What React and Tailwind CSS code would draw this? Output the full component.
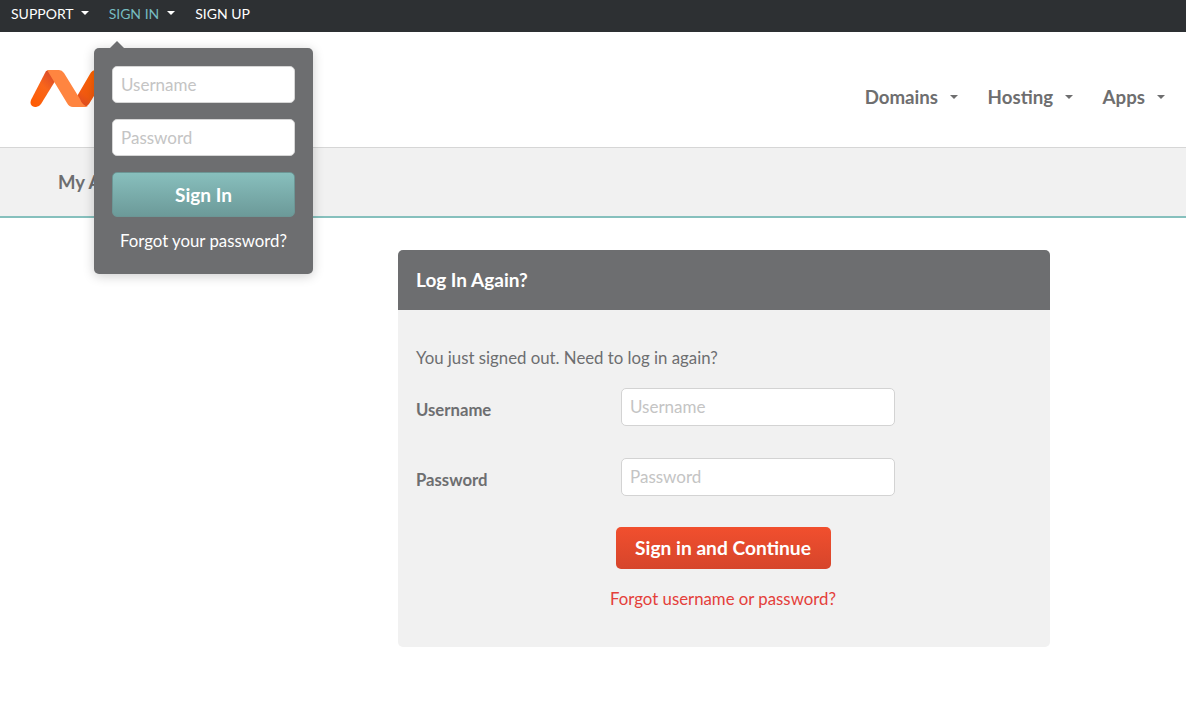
import { useState } from 'react';

const font = "font-['Lato','Noto_Sans',sans-serif]";

function Caret({ className }) {
  return <span className={`inline-block w-0 h-0 border-x-[4px] border-x-transparent border-t-[4px] ${className}`} />;
}

function Logo() {
  return (
    <svg width="90" height="40" viewBox="0 0 90 40" className="block">
      <defs>
        <linearGradient id="leg" x1="0" y1="1" x2="0.7" y2="0">
          <stop offset="0" stopColor="#ff5a00" />
          <stop offset="0.6" stopColor="#f9661a" />
          <stop offset="1" stopColor="#d94a2a" />
        </linearGradient>
        <linearGradient id="rise" x1="0" y1="1" x2="0.6" y2="0">
          <stop offset="0" stopColor="#d2432c" />
          <stop offset="0.4" stopColor="#f25a10" />
          <stop offset="1" stopColor="#ff6400" />
        </linearGradient>
      </defs>
      <path d="M16 2 Q18 1 22 1 L27 9 L11 35 Q9 38 6 38 H5 Q-1 37 1 31 Z" fill="url(#leg)" />
      <path d="M46 29 L60 5 Q62 1 66 1 H72 V14 L59 35 Q57 38 54 38 Z" fill="url(#rise)" />
      <path d="M17 1 H29 Q32 1 34 4 L50 30 Q52 36 58 38 H43 Q39 38 37 34 Z" fill="#ff8540" />
    </svg>
  );
}

function TopBar() {
  return (
    <div className="h-8 bg-[#2d3033] flex items-center pl-[11px] pb-[6px] text-[14px] text-white">
      <span>SUPPORT</span>
      <Caret className="ml-[7px] border-t-white" />
      <span className="ml-[20px] text-[#76bcc0]">SIGN IN</span>
      <Caret className="ml-[8px] border-t-white" />
      <span className="ml-[20px]">SIGN UP</span>
    </div>
  );
}

function MainNav() {
  const items = ['Domains', 'Hosting', 'Apps'];
  return (
    <header className="h-[116px] bg-white border-b border-[#d6d6d6] flex items-center justify-between pl-[30px] pr-[21px]">
      <div className="mt-[-2px]"><Logo /></div>
      <nav className="flex items-center gap-[29.5px] mt-[15px] text-[18.7px] font-bold text-[#6e6e6f]">
        {items.map((item) => (
          <span key={item} className="flex items-center">
            {item}
            <Caret className="ml-[12px] border-t-[#6e6e6f]" />
          </span>
        ))}
      </nav>
    </header>
  );
}

function SignInPopover() {
  return (
    <div className="absolute left-[94px] top-[48px] w-[219px] h-[226px] bg-[#6d6e70] rounded-[5px] shadow-[0_2px_12px_rgba(0,0,0,0.2)] px-[18px] pt-[18px]">
      <span className="absolute left-[16px] -top-[7px] w-0 h-0 border-x-[7px] border-x-transparent border-b-[7px] border-b-[#6d6e70]" />
      <input placeholder="Username" className="block w-full h-[37px] bg-white border border-[#d6d6d6] rounded-[5px] px-[8px] text-[17px] outline-none placeholder:text-[#c4c4c4]" />
      <input placeholder="Password" className="block w-full h-[37px] mt-[16px] bg-white border border-[#d6d6d6] rounded-[5px] px-[8px] text-[17px] outline-none placeholder:text-[#c4c4c4]" />
      <button className="block w-full h-[45px] mt-[16px] pt-[1px] rounded-[5px] border border-[#6c9695] bg-gradient-to-b from-[#88bfbd] to-[#6c9a99] text-white text-[19px] font-bold">Sign In</button>
      <p className="mt-[14px] text-center text-[16.8px] leading-[20px] text-white whitespace-nowrap">Forgot your password?</p>
    </div>
  );
}

function Field({ label, top }) {
  return (
    <div className={`flex items-center ${top}`}>
      <label className="w-[205px] pt-[7px] text-[16.7px] font-bold text-[#6d6e70]">{label}</label>
      <input placeholder={label} className="w-[274px] h-[38px] bg-white border border-[#d3d3d3] rounded-[5px] px-[8px] pb-[2px] text-[17px] outline-none placeholder:text-[#c4c4c4]" />
    </div>
  );
}

function LoginCard() {
  return (
    <section className="ml-[398px] mt-[32px] w-[652px] h-[397px] rounded-[5px] overflow-hidden bg-[#f1f1f1]">
      <h2 className="h-[60px] bg-[#6d6e70] pl-[18px] flex items-center text-[19px] font-bold text-white">Log In Again?</h2>
      <div className="px-[18px]">
        <p className="mt-[37px] text-[16.8px] leading-[22px] text-[#6d6e70]">You just signed out. Need to log in again?</p>
        <Field label="Username" top="mt-[19px]" />
        <Field label="Password" top="mt-[32px]" />
        <div className="flex flex-col items-center w-[614px]">
          <button className="mt-[31px] w-[215px] h-[42px] rounded-[5px] bg-gradient-to-b from-[#f14f2e] to-[#d6452b] text-white text-[19.2px] font-bold">Sign in and Continue</button>
          <a className="mt-[19px] text-[16.8px] leading-[22px] text-[#e4403a]">Forgot username or password?</a>
        </div>
      </div>
    </section>
  );
}

export default function App() {
  const [open] = useState(true);
  return (
    <div className={`relative min-h-[713px] bg-white overflow-hidden ${font}`}>
      <TopBar />
      <MainNav />
      <div className="h-[70px] bg-[#f1f1f1] border-b-2 border-[#86c0bd] pl-[58px] pt-[23px] text-[18.5px] leading-[22px] font-bold text-[#6d6e70]">My Account</div>
      <LoginCard />
      {open && <SignInPopover />}
    </div>
  );
}
